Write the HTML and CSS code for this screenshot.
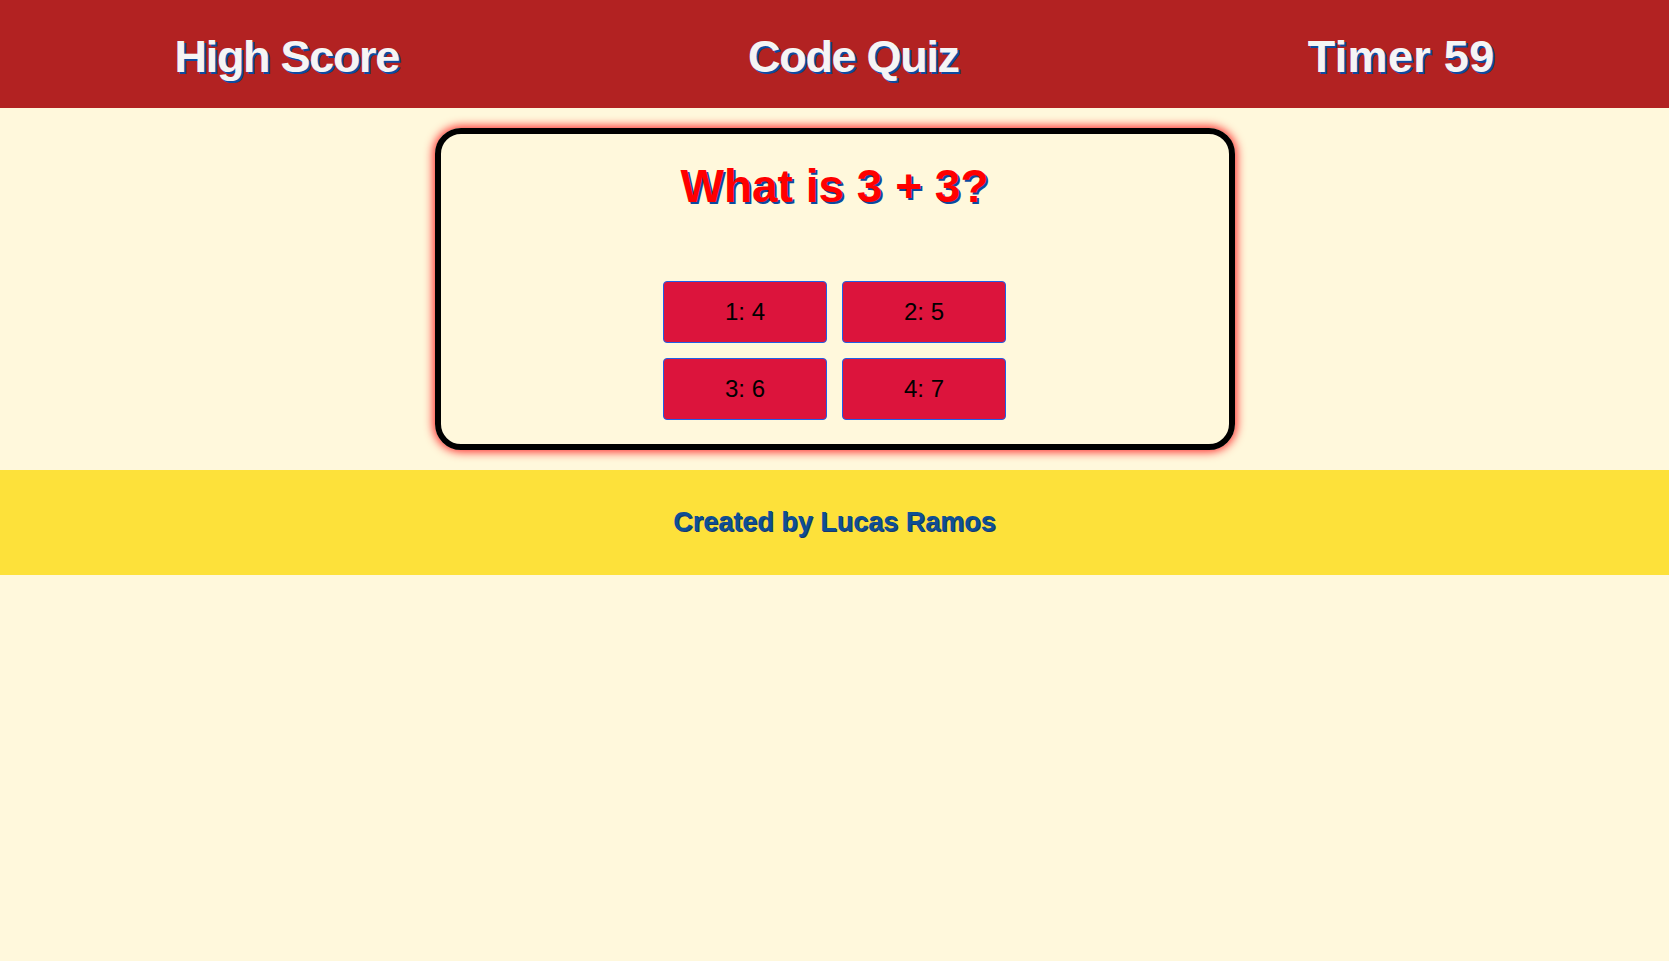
FILE: index.html
```html
<!DOCTYPE html>
<html lang="en">
<head>
<meta charset="utf-8">
<title>Code Quiz</title>
<link rel="stylesheet" href="styles.css">
</head>
<body>
<header class="top-bar">
  <div class="top-item">High Score</div>
  <div class="top-item">Code Quiz</div>
  <div class="top-item top-item--timer">Timer 59</div>
</header>
<main class="stage">
  <section class="card">
    <h2 class="question">What is 3 + 3?</h2>
    <div class="answers">
      <button class="answer">1: 4</button>
      <button class="answer">2: 5</button>
      <button class="answer">3: 6</button>
      <button class="answer">4: 7</button>
    </div>
  </section>
</main>
<footer class="footer">
  <p class="credit">Created by Lucas Ramos</p>
</footer>
</body>
</html>
```

FILE: styles.css
```css
html, body {
  margin: 0;
  padding: 0;
}

body {
  background: #fff8dc;
  font-family: "Liberation Sans", Arial, sans-serif;
  min-height: 961px;
}

.top-bar {
  height: 108px;
  background: #b22222;
  display: flex;
  justify-content: space-around;
  align-items: center;
}

.top-item {
  color: #f5f5f5;
  font-weight: 700;
  font-size: 45px;
  letter-spacing: -1.3px;
  line-height: 1;
  padding-top: 4px;
  text-shadow: 2px 2px 0 #0d4aa0;
}

.top-item--timer {
  letter-spacing: 0.3px;
}

.stage {
  display: flex;
  justify-content: center;
  padding-top: 20px;
}

.card {
  width: 800px;
  height: 322px;
  box-sizing: border-box;
  border: 6px solid #000;
  border-radius: 26px;
  box-shadow: 0 0 10px 2px #ff3030;
  padding: 29px 0 0;
  display: flex;
  flex-direction: column;
  align-items: center;
}

.question {
  margin: 0;
  color: #ff0000;
  font-size: 46px;
  line-height: 46px;
  font-weight: 700;
  text-shadow: 2px 2px 0 #0b4aa0;
}

.answers {
  margin-top: 72px;
  display: grid;
  grid-template-columns: 164px 164px;
  grid-auto-rows: 62px;
  gap: 15px;
}

.answer {
  background: #dc143c;
  border: 1px solid #1f5fe8;
  border-radius: 4px;
  color: #000;
  font-family: "Liberation Sans", Arial, sans-serif;
  font-size: 24px;
  padding: 0;
}

.footer {
  margin-top: 20px;
  height: 105px;
  background: #fde13a;
  display: flex;
  align-items: center;
  justify-content: center;
}

.credit {
  margin: 0;
  color: #0e4f94;
  font-weight: 700;
  font-size: 27px;
  text-shadow: 1px 1px 0 #17386e;
}
```
